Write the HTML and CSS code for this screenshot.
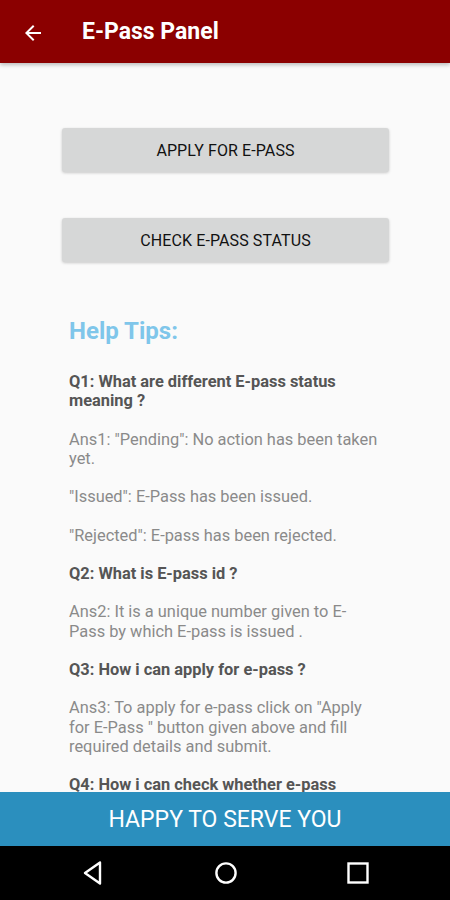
FILE: index.html
```html
<!DOCTYPE html>
<html>
<head>
<meta charset="utf-8">
<link rel="stylesheet" href="styles.css">
</head>
<body>
<div class="screen">
  <header class="appbar">
    <svg class="back" width="24" height="24" viewBox="0 0 24 24"><path d="M20 11H7.83l5.59-5.59L12 4l-8 8 8 8 1.41-1.41L7.83 13H20v-2z" fill="#fff"/></svg>
    <h1 class="title">E-Pass Panel</h1>
  </header>
  <main class="content">
    <div class="buttons">
      <button class="btn">APPLY FOR E-PASS</button>
      <button class="btn">CHECK E-PASS STATUS</button>
    </div>
    <section class="tips">
      <h2 class="tips-title">Help Tips:</h2>
      <p class="q">Q1: What are different E-pass status meaning ?</p>
      <p class="a">Ans1: "Pending": No action has been taken yet.</p>
      <p class="a">"Issued": E-Pass has been issued.</p>
      <p class="a">"Rejected": E-pass has been rejected.</p>
      <p class="q">Q2: What is E-pass id ?</p>
      <p class="a">Ans2: It is a unique number given to E-&#8203;Pass by which E-pass is issued .</p>
      <p class="q">Q3: How i can apply for e-pass ?</p>
      <p class="a">Ans3: To apply for e-pass click on "Apply for E-Pass " button given above and fill required details and submit.</p>
      <p class="q">Q4: How i can check whether e-pass issued or not ?</p>
    </section>
  </main>
  <footer class="banner">HAPPY TO SERVE YOU</footer>
  <nav class="navbar">
    <svg width="24" height="26" viewBox="0 0 24 26"><path d="M19 2.5 L4 13 L19 23.5 Z" fill="none" stroke="#fff" stroke-width="2.4" stroke-linejoin="round"/></svg>
    <svg width="24" height="24" viewBox="0 0 24 24"><circle cx="12" cy="12" r="9.6" fill="none" stroke="#fff" stroke-width="2.4"/></svg>
    <svg width="24" height="24" viewBox="0 0 24 24"><rect x="2.5" y="2.5" width="19" height="19" fill="none" stroke="#fff" stroke-width="2.4"/></svg>
  </nav>
</div>
</body>
</html>
```

FILE: styles.css
```css
* { box-sizing: border-box; }
html, body { margin: 0; padding: 0; }
body {
  font-family: Roboto, "Liberation Sans", Arial, sans-serif;
  background: #fafafa;
}
.screen {
  width: 450px;
  height: 900px;
  display: flex;
  flex-direction: column;
  overflow: hidden;
  background: #fafafa;
}
.appbar {
  flex: 0 0 63px;
  background: #8b0000;
  display: flex;
  align-items: center;
  padding-left: 21px;
  box-shadow: 0 2px 4px rgba(0,0,0,0.25);
  position: relative;
  z-index: 2;
}
.back { display: block; margin-top: 2px; }
.title {
  margin: 0 0 0 37px;
  color: #fff;
  font-size: 23px;
  font-weight: 700;
  letter-spacing: 0;
}
.content {
  flex: 1 1 auto;
  overflow: hidden;
  padding: 65px 61px 0 62px;
}
.buttons {
  display: flex;
  flex-direction: column;
  gap: 46px;
}
.btn {
  height: 44px;
  border: none;
  border-radius: 3px;
  background: #d6d7d7;
  box-shadow: 0 1px 3px rgba(0,0,0,0.2);
  font-family: inherit;
  font-size: 16px;
  font-weight: 400;
  color: #111;
  letter-spacing: 0.1px;
}
.tips {
  padding: 54px 10px 0 7px;
}
.tips-title {
  margin: 0 0 26px;
  color: #7fc6ea;
  font-size: 24px;
  font-weight: 700;
  line-height: 30px;
}
.q, .a {
  margin: 0 0 19.2px;
  font-size: 16.4px;
  line-height: 19.2px;
}
.q { font-weight: 700; color: #555; }
.a { color: #8a8a8a; }
.banner {
  flex: 0 0 54px;
  background: #2b8fbe;
  color: #fff;
  font-size: 23px;
  display: flex;
  align-items: center;
  justify-content: center;
  letter-spacing: 0;
}
.navbar {
  flex: 0 0 54px;
  background: #000;
  display: flex;
  align-items: center;
  justify-content: space-between;
  padding: 0 80px 0 81px;
}
.navbar svg { display: block; }
```
